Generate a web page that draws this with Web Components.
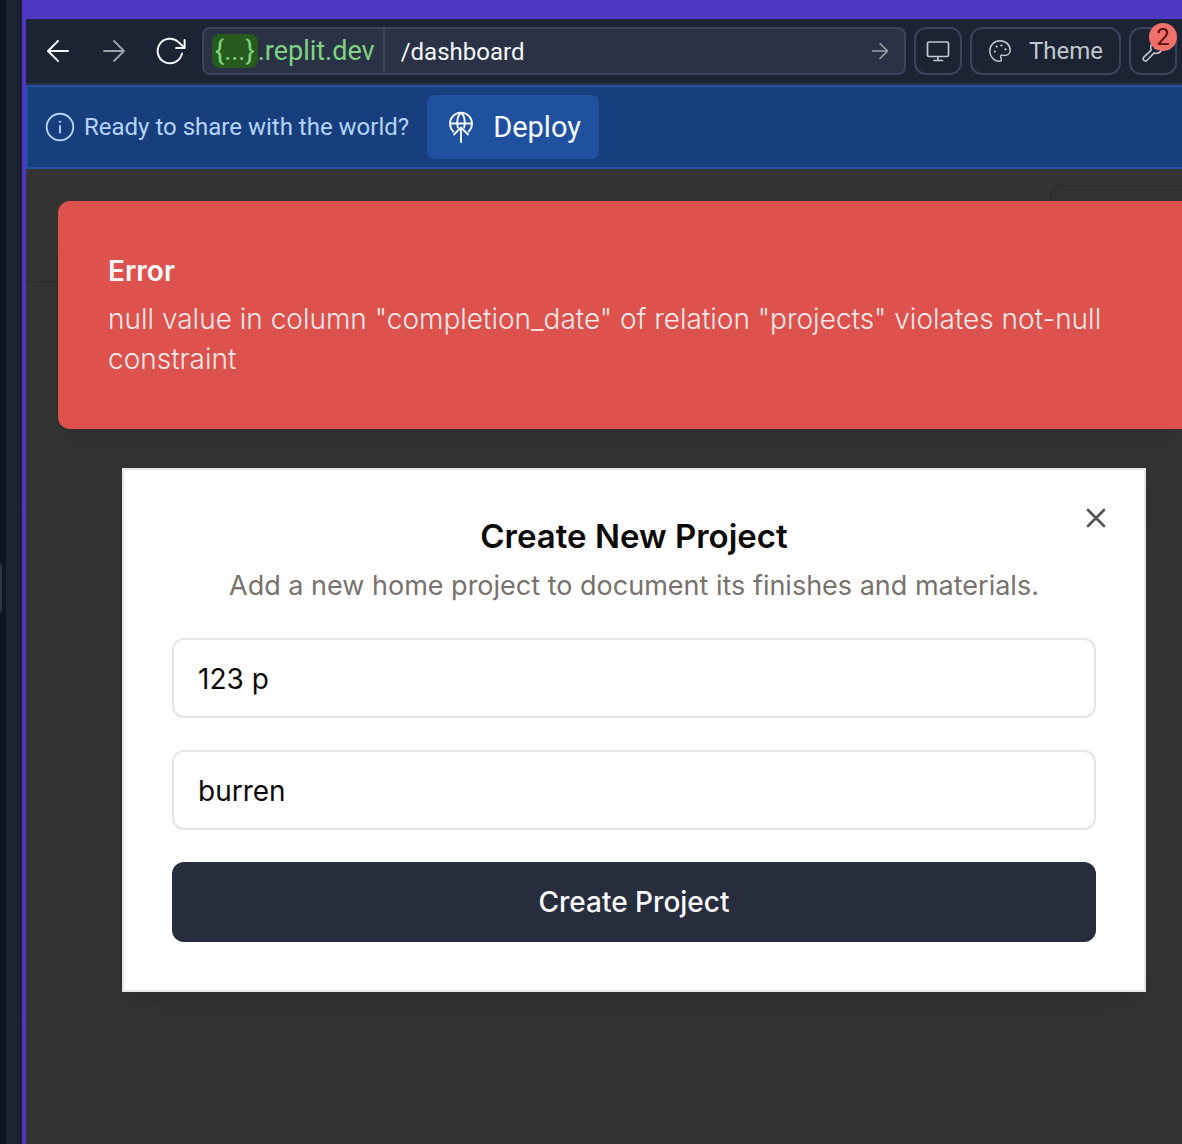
<!DOCTYPE html>
<html lang="en">
<head>
<meta charset="utf-8">
<title>Dashboard preview</title>
<style>
html, body { margin: 0; height: 100%; }
body { overflow: hidden; background: #0e1525; }
</style>
</head>
<body>
<workspace-shell>
  <browser-toolbar host=".replit.dev" path="/dashboard" alerts="2"></browser-toolbar>
  <deploy-banner>Ready to share with the world?</deploy-banner>
  <app-stage>
    <error-toast slot="toast">
      <span slot="title">Error</span>
      null value in column "completion_date" of relation "projects" violates not-null constraint
    </error-toast>
    <project-dialog slot="dialog" name="123 p" place="burren">
      <span slot="title">Create New Project</span>
      <span slot="description">Add a new home project to document its finishes and materials.</span>
    </project-dialog>
  </app-stage>
</workspace-shell>

<script>
const base = `
  *, *::before { box-sizing: border-box; }
  button, input { font: inherit; color: inherit; margin: 0; }
  button { cursor: pointer; }
  svg { display: block; flex: none; fill: none; stroke: currentColor; stroke-linecap: round; stroke-linejoin: round; }
`;
function define(name, render) {
  customElements.define(name, class extends HTMLElement {
    constructor() {
      super();
      this.attachShadow({ mode: 'open' });
    }
    connectedCallback() {
      this.shadowRoot.innerHTML = '<style>' + base + '</style>' + render(this);
    }
  });
}

define('workspace-shell', () => `
<style>
  :host { display: flex; height: 100vh; }
  .gutter { flex: 0 0 6px; display: flex; align-items: center; padding-top: 32px; background: #0e1525; }
  .handle { width: 2px; height: 48px; background: #2b3245; border-radius: 0 2px 2px 0; }
  .edge { flex: 0 0 16px; background: linear-gradient(90deg, #1c2333 0 30%, #1a202e); }
  .pane { flex: 1; min-width: 0; display: flex; flex-direction: column; border: solid #4e38c4; border-width: 19px 0 0 4px; }
</style>
<div class="gutter"><div class="handle"></div></div>
<div class="edge"></div>
<main class="pane"><slot></slot></main>`);

define('browser-toolbar', el => `
<style>
  :host { display: flex; align-items: center; gap: 8px; padding: 8px 5px 8px 8px; background: #1c2333; border-bottom: 2px solid #2b3245;
          font: 24px/32px Roboto, sans-serif; color: #f5f9fc; }
  button { display: flex; align-items: center; justify-content: center; height: 48px; min-width: 48px; padding: 0; background: none; border: 0; }
  .fwd { color: #9da2a6; }
  form { flex: 1; min-width: 0; display: flex; height: 48px; margin: 0; background: #2b3245; border: 2px solid #3c445c; border-radius: 8px; overflow: hidden; }
  label { display: flex; align-items: center; padding: 0 8px; color: #7ed482; border-right: 2px solid #3c445c; font-size: 27px; }
  .chip { padding: 1px 3px; background: #265b1d; border-radius: 8px; }
  input { flex: 1; min-width: 0; padding: 2px 16px 0; background: none; border: 0; outline: 0; }
  form button { height: auto; color: #9da2a6; }
  .tool { position: relative; border: 2px solid #3c445c; border-radius: 12px; color: #c2c8cc; }
  .theme { padding: 0 16px; gap: 17px; }
  .badge { position: absolute; right: -2px; top: -6px; width: 28px; height: 28px; border-radius: 14px; background: #f0706a; color: #5c0a0a; line-height: 28px; text-align: center; }
</style>
<button aria-label="Back"><svg width="24" height="24" viewBox="0 0 24 24" stroke-width="2"><path d="M22 12H2M12 2L2 12l10 10"/></svg></button>
<button class="fwd" aria-label="Forward"><svg width="24" height="24" viewBox="0 0 24 24" stroke-width="1.8"><path d="M2 12h20M12 2l10 10-10 10"/></svg></button>
<button aria-label="Reload"><svg width="32" height="32" viewBox="0 0 32 32" stroke-width="2"><path d="M28 18.400A12.300 12.300 0 1 1 24.500 7.100L30.400 12.800M30.600 5v8h-8.500"/></svg></button>
<form onsubmit="return false">
  <label for="path"><span class="chip">{...}</span><span>${el.getAttribute('host')}</span></label>
  <input id="path" value="${el.getAttribute('path')}">
  <button aria-label="Go"><svg width="18" height="18" viewBox="0 0 18 18" stroke-width="1.6"><path d="M1.5 9h15M9 1.5L16.500 9 9 16.500"/></svg></button>
</form>
<button class="tool" aria-label="Screen size"><svg width="24" height="24" viewBox="0 0 24 24" stroke-width="1.700"><rect x="1.500" y="3" width="21" height="14.500" rx="1.500"/><path d="M12 18v3.500M8 21.500h8.500"/></svg></button>
<button class="tool theme"><svg width="24" height="24" viewBox="0 0 24 24" stroke-width="1.500"><path d="M11.900 1.800C6 1.800 1.800 6.300 1.800 12S6 22.300 11.500 22.300c1.500 0 2-1 1.700-2.300l-.6-2.200c-.2-1.200.8-2 1.900-1.700 4.200 1.100 7.700-.6 7.700-4.600 0-5.400-4.300-9.700-10.300-9.700z"/><g fill="currentColor" stroke-width=".6"><circle cx="6.800" cy="12.500" r=".8"/><circle cx="8.600" cy="7.600" r=".8"/><circle cx="13.300" cy="6.500" r=".8"/><circle cx="17.400" cy="10.300" r=".8"/></g></svg><span>Theme</span></button>
<button class="tool" aria-label="Developer tools"><svg width="24" height="24" viewBox="0 0 24 24" stroke-width="1.600"><path d="M15.500 2.500a6 6 0 0 0-5.300 8.600l-7.600 7.200a2.300 2.300 0 0 0 3.200 3.200l7.400-7.600a6 6 0 0 0 7.900-7.500l-3.500 3.500-3.500-.8-.8-3.500z"/></svg><span class="badge">${el.getAttribute('alerts')}</span></button>`);

define('deploy-banner', () => `
<style>
  :host { display: flex; align-items: center; gap: 18px; padding: 8px 16px; background: #183f7d; border: 2px solid #2050a0; border-right: 0;
          font: 24px/32px Roboto, sans-serif; color: #b5d4fb; }
  .note { display: flex; align-items: center; gap: 8px; }
  button { display: flex; align-items: center; gap: 16px; height: 64px; padding: 0 18px; background: #2051a1; border: 0; border-radius: 8px; color: #f5f9fc; font-size: 29px; }
</style>
<div class="note">
  <svg width="32" height="32" viewBox="-1 -1 32 32" stroke-width="1.900"><circle cx="15" cy="15" r="13.300"/><path d="M15 14v6.500"/><circle cx="15" cy="9.700" r=".7" fill="currentColor" stroke-width="1"/></svg>
  <span><slot></slot></span>
</div>
<button><svg width="32" height="32" viewBox="0 0 32 32" stroke-width="1.900"><path d="M8.300 20.500A11 11 0 1 1 23.700 20.500M5 12.500h22M12.800 16.500C11.200 10 13 4 16 1.800c3 2.200 4.800 8.200 3.200 14.700M16 31V17M9 23.500l7-7 7 7"/></svg><span>Deploy</span></button>`);

define('app-stage', () => `
<style>
  :host { position: relative; flex: 1; min-height: 0; display: block; background: #333; overflow: hidden; }
  .page-head { display: flex; justify-content: flex-end; height: 114px; padding-top: 16px; border-bottom: 2px solid #2e2e2e; box-sizing: border-box; }
  .ghost { width: 132px; height: 80px; border: 2px solid #2e2e2e; border-right: 0; border-radius: 12px 0 0 12px; }
  .layer { position: absolute; inset: 0; display: flex; flex-direction: column; gap: 39px; padding: 32px 0 0 32px; }
</style>
<header class="page-head"><div class="ghost"></div></header>
<div class="layer"><slot name="toast"></slot><slot name="dialog"></slot></div>`);

define('error-toast', () => `
<style>
  :host { display: flex; flex-direction: column; gap: 8px; padding: 50px 48px 50px 50px; background: #dd524c; border-radius: 12px 0 0 12px;
          box-shadow: 0 20px 30px -6px rgba(0,0,0,.08), 0 8px 12px -8px rgba(0,0,0,.08); font: 28px/40px Inter, sans-serif; color: #fafafa; }
  strong { font-weight: 600; }
  p { margin: 0; font-weight: 300; opacity: .9; }
</style>
<strong><slot name="title"></slot></strong>
<p role="alert"><slot></slot></p>`);

define('project-dialog', el => `
<style>
  :host { position: relative; display: block; margin: 0 36px 0 64px; padding: 48px; background: #fff; border: 2px solid #e5e5e5;
          box-shadow: 0 20px 30px -6px rgba(0,0,0,.08), 0 8px 12px -8px rgba(0,0,0,.08); font: 28px/40px Inter, sans-serif; color: #0c0a09; }
  header { display: flex; flex-direction: column; gap: 12px; text-align: center; }
  h2 { margin: 0; font-size: 33px; line-height: 36px; font-weight: 600; }
  p { margin: 0; font-size: 27px; color: #78716c; }
  form { display: flex; flex-direction: column; gap: 32px; margin: 32px 0 0; }
  input { width: 100%; height: 80px; padding: 2px 24px 0; background: #fff; border: 2px solid #e5e5e5; border-radius: 12px; outline: 0; }
  .submit { height: 80px; border: 0; border-radius: 12px; background: #282d3d; color: #fafafa; font-weight: 500; }
  .close { position: absolute; top: 32px; right: 32px; width: 32px; height: 32px; padding: 0; border: 0; background: none; color: #555454; }
</style>
<header><h2><slot name="title"></slot></h2><p><slot name="description"></slot></p></header>
<form onsubmit="return false">
  <input aria-label="Project name" value="${el.getAttribute('name')}">
  <input aria-label="Location" value="${el.getAttribute('place')}">
  <button class="submit">Create Project</button>
</form>
<button class="close" aria-label="Close"><svg width="32" height="32" viewBox="0 0 32 32" stroke-width="2.700"><path d="M8 8l16 16M24 8L8 24"/></svg></button>`);
</script>
</body>
</html>
